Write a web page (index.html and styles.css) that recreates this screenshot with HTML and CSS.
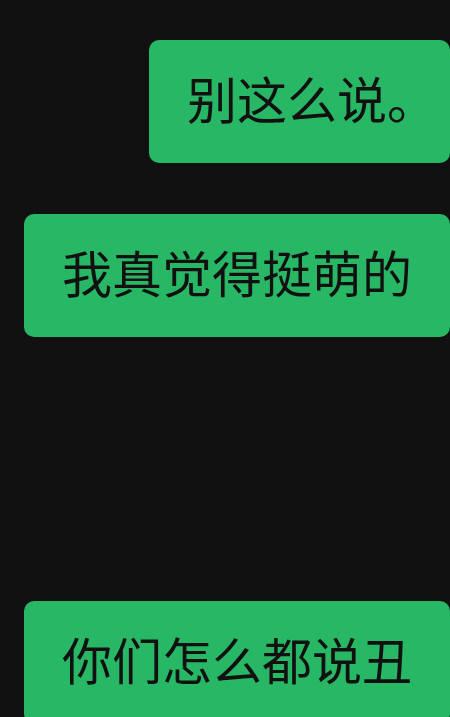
FILE: index.html
```html
<!DOCTYPE html>
<html lang="zh-CN">
<head>
    <meta charset="UTF-8">
    <meta name="viewport" content="width=device-width, initial-scale=1.0">
    <title>聊天</title>
    <link rel="stylesheet" href="styles.css">
</head>
<body>
    <div class="chat">
        <div class="bubble">别这么说<span class="trail">。</span></div>
        <div class="bubble">我真觉得挺萌的</div>
        <div class="bubble gap-big">你们怎么都说丑</div>
    </div>
</body>
</html>
```

FILE: styles.css
```css
body {
    margin: 0;
    background: #111111;
    font-family: "Noto Sans CJK SC", "Noto Sans", sans-serif;
    overflow: hidden;
}

.chat {
    display: flex;
    flex-direction: column;
    align-items: flex-end;
    gap: 51px;
    padding-top: 40px;
}

.bubble {
    background-color: #28b764;
    color: #111111;
    font-size: 50px;
    line-height: 75px;
    padding: 20px 38px 28px;
    border-radius: 10px;
    white-space: nowrap;
}

/* half-width closing punctuation at line end */
.trail {
    margin-right: -0.5em;
}

.gap-big {
    margin-top: 213px;
}
```
